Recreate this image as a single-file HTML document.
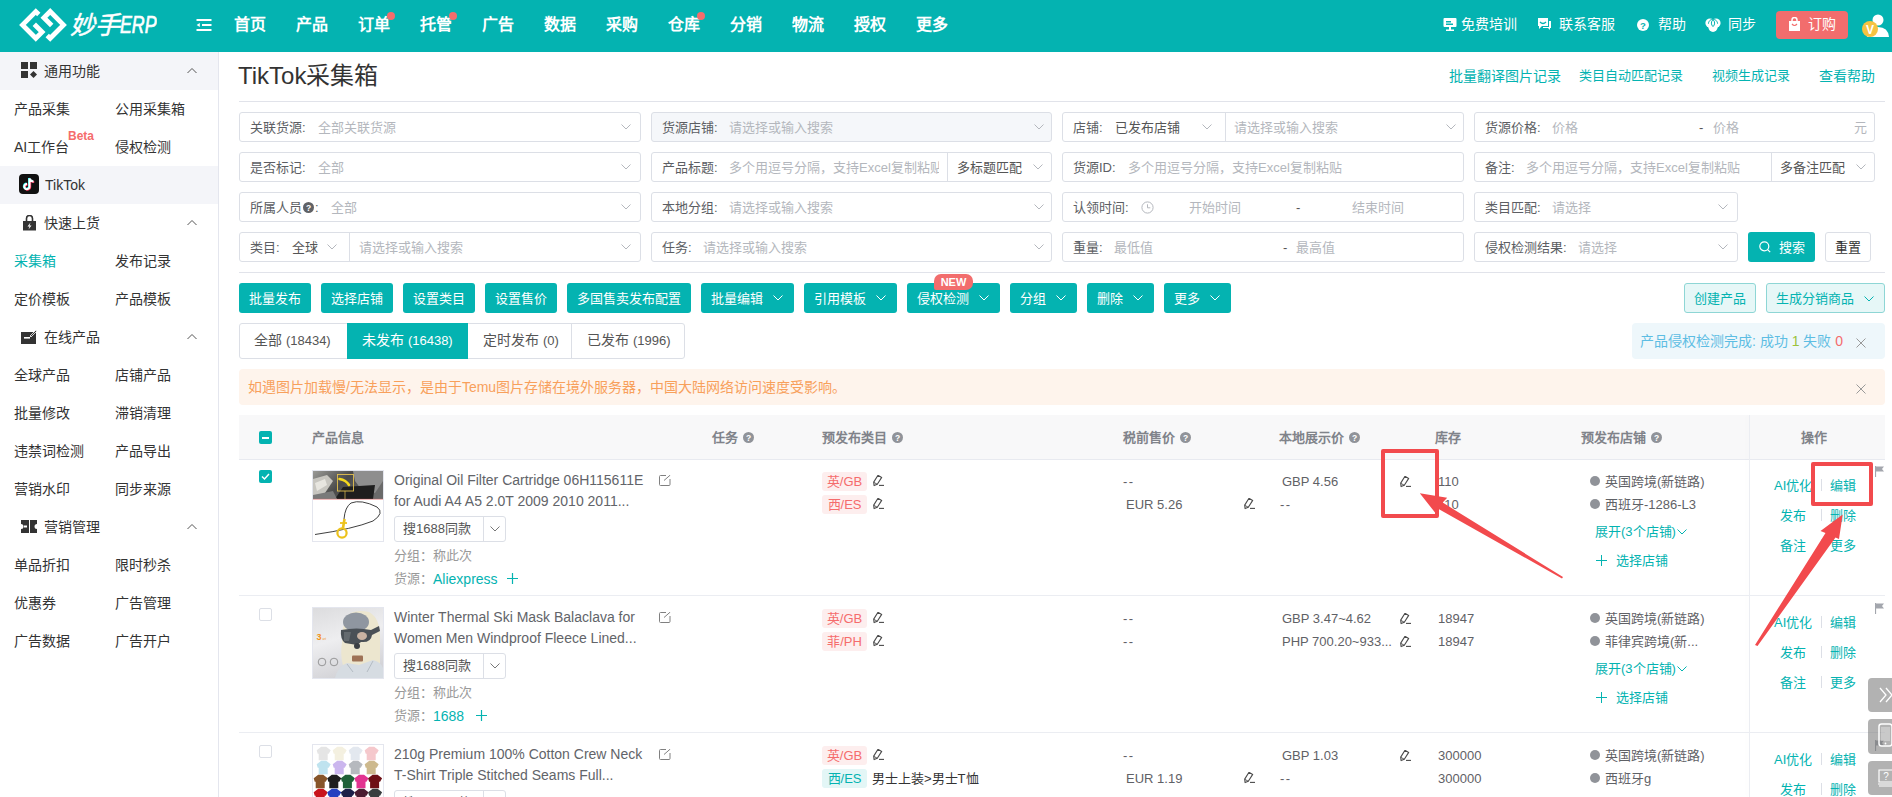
<!DOCTYPE html>
<html lang="zh-CN"><head><meta charset="utf-8">
<style>
*{box-sizing:border-box;margin:0;padding:0}
html,body{width:1892px;height:797px;overflow:hidden;background:#fff}
body{position:relative;font-family:"Liberation Sans",sans-serif;color:#333;font-size:14px}
.a{position:absolute;white-space:nowrap}
#hdr{position:absolute;left:0;top:0;width:1892px;height:52px;background:#04b3b1}
.nav{position:absolute;top:15px;line-height:20px;font-size:16px;font-weight:bold;color:#fff}
.dot{position:absolute;width:8px;height:8px;border-radius:50%;background:#f56c6c}
.hr{position:absolute;top:14px;line-height:20px;font-size:14px;color:#fff}
#side{position:absolute;left:0;top:52px;width:219px;height:745px;border-right:1px solid #e4e6ee;background:#fff}
.sh{position:absolute;left:0;width:218px;height:38px}
.si{position:absolute;line-height:20px;font-size:14px;color:#333}
.caret{position:absolute;left:187px;width:10px;height:10px}
.fb{position:absolute;height:30px;border:1px solid #dcdfe6;border-radius:3px;background:#fff}
.lb{position:absolute;top:6px;line-height:18px;font-size:13px;color:#5c5e63;white-space:nowrap}
.ph{position:absolute;top:6px;line-height:18px;font-size:13px;color:#b4b7bd;white-space:nowrap}
.vl{position:absolute;top:6px;line-height:18px;font-size:13px;color:#555;white-space:nowrap}
.chev{position:absolute;top:11px;width:10px;height:6px}
.vd{position:absolute;top:0;width:1px;height:28px;background:#dcdfe6}
.lk{position:absolute;top:66px;line-height:20px;color:#04b3b1;white-space:nowrap}
.btn{position:absolute;top:283px;height:30px;border-radius:3px;background:#04b3b1}
.bt{position:absolute;top:6px;left:10px;line-height:20px;font-size:13px;color:#fff;white-space:nowrap}
.bch{position:absolute;top:12px;width:10px;height:6px}
.tab{position:absolute;top:6px;line-height:22px;font-size:14px;color:#555;white-space:nowrap}
.th{position:absolute;top:428px;line-height:20px;font-size:13px;font-weight:bold;color:#80838a;white-space:nowrap}
.q{position:absolute;width:11px;height:11px}
.t14{position:absolute;line-height:20px;font-size:14px;color:#626469;white-space:nowrap}
.t13{position:absolute;padding-top:1px;line-height:20px;font-size:13px;color:#5f6166;white-space:nowrap}
.tag{position:absolute;margin-top:1px;left:822px;width:45px;height:19px;border-radius:3px;background:#fdeeee;color:#f56c6c;font-size:13px;line-height:19px;text-align:center}
.cb{position:absolute;left:259px;width:13px;height:13px;border-radius:2px;border:1px solid #dcdfe6;background:#fff}
.ac{position:absolute;padding-top:1px;line-height:20px;font-size:13px;color:#04b3b1;white-space:nowrap}
.sep{position:absolute;left:1821px;width:1px;height:12px;background:#dcdfe6}
.bul{position:absolute;left:1590px;width:10px;height:10px;border-radius:50%;background:#909399}
.rb{position:absolute;left:239px;width:1646px;height:1px;background:#ebedf2}
.pen{position:absolute;margin-top:2px;width:12px;height:12px}
</style></head><body>

<!-- HEADER -->
<div id="hdr">
  <svg class="a" style="left:0;top:0" width="70" height="52" viewBox="0 0 70 52">
    <g fill="none" stroke="#fff" stroke-width="4.8" stroke-linejoin="miter" stroke-linecap="butt">
      <path d="M38.8 14.4 L35.8 11.5 L22.5 24.9 L35.8 38.3 L42.1 32.1 L34.3 24.3"/>
      <path d="M47.2 35.4 L50.2 38.3 L63.5 24.9 L50.2 11.5 L43.9 17.7 L51.7 25.5"/>
    </g>
  </svg>
  <div class="a" style="left:70px;top:9px;font-size:25px;line-height:32px;color:#fff;font-style:italic;-webkit-text-stroke:0.5px #fff">妙手</div><div class="a" style="left:120px;top:9px;font-size:24px;line-height:32px;color:#fff;font-style:italic;transform:scaleX(0.74);transform-origin:0 0;-webkit-text-stroke:0.7px #fff">ERP</div>
  <svg class="a" style="left:196px;top:19px" width="16" height="12" viewBox="0 0 16 12"><rect x="0.5" y="0" width="15" height="2" fill="#fff"/><rect x="6" y="5" width="9.5" height="2" fill="#fff"/><rect x="0.5" y="10" width="15" height="2" fill="#fff"/><path d="M0.6 6 L3.8 3.9 L3.8 8.1 Z" fill="#fff"/></svg>
  <div class="nav" style="left:234px">首页</div>
  <div class="nav" style="left:296px">产品</div>
  <div class="nav" style="left:358px">订单</div><div class="dot" style="left:387px;top:12px"></div>
  <div class="nav" style="left:420px">托管</div><div class="dot" style="left:449px;top:12px"></div>
  <div class="nav" style="left:482px">广告</div>
  <div class="nav" style="left:544px">数据</div>
  <div class="nav" style="left:606px">采购</div>
  <div class="nav" style="left:668px">仓库</div><div class="dot" style="left:697px;top:12px"></div>
  <div class="nav" style="left:730px">分销</div>
  <div class="nav" style="left:792px">物流</div>
  <div class="nav" style="left:854px">授权</div>
  <div class="nav" style="left:916px">更多</div>

  <!-- right -->
  <svg class="a" style="left:1443px;top:17px" width="14" height="14" viewBox="0 0 14 14"><rect x="0.5" y="1" width="13" height="9" rx="1" fill="#fff"/><rect x="3" y="4" width="5" height="1.5" fill="#04b3b1"/><rect x="3" y="6.5" width="7" height="1.5" fill="#04b3b1"/><rect x="6" y="10" width="2" height="3" fill="#fff"/><rect x="3" y="12.5" width="8" height="1.5" fill="#fff"/></svg>
  <div class="hr" style="left:1461px">免费培训</div>
  <svg class="a" style="left:1537px;top:17px" width="15" height="14" viewBox="0 0 15 14"><path d="M1 1 H11 V9 H5 L2 12 V9 H1 Z" fill="#fff"/><path d="M12 4 H14 V11 H13 V13 L11 11 H6 V10 H12 Z" fill="#fff"/><path d="M3 5 Q6 8 9 5" stroke="#04b3b1" stroke-width="1.3" fill="none"/></svg>
  <div class="hr" style="left:1559px">联系客服</div>
  <svg class="a" style="left:1637px;top:19px" width="12" height="12" viewBox="0 0 12 12"><circle cx="6" cy="6" r="6" fill="#fff"/><text x="6" y="9.6" text-anchor="middle" font-size="9.5" font-weight="bold" fill="#04b3b1" font-family="Liberation Sans">?</text></svg>
  <div class="hr" style="left:1658px">帮助</div>
  <svg class="a" style="left:1705px;top:18px" width="16" height="14" viewBox="0 0 16 14"><circle cx="5" cy="5" r="4.6" fill="#fff"/><circle cx="11" cy="5" r="4.6" fill="#fff"/><circle cx="8" cy="9.3" r="4.6" fill="#fff"/><path d="M8 1.6 A4.6 4.6 0 0 1 8 8.6 A4.6 4.6 0 0 1 8 1.6" fill="none" stroke="#04b3b1" stroke-width="1"/><path d="M3.4 5.8 A4.6 4.6 0 0 1 12.6 5.8" fill="none" stroke="#04b3b1" stroke-width="0.9"/></svg>
  <div class="hr" style="left:1728px">同步</div>
  <div class="a" style="left:1776px;top:11px;width:72px;height:28px;border-radius:4px;background:#f26d6d"></div>
  <svg class="a" style="left:1788px;top:17px" width="13" height="15" viewBox="0 0 13 15"><path d="M1 4 H12 V14 H1 Z" fill="#fff"/><path d="M4 5 V3 A2.5 2.5 0 0 1 9 3 V5" stroke="#fff" stroke-width="1.5" fill="none"/><path d="M4 7 Q6.5 10 9 7" stroke="#f26d6d" stroke-width="1.2" fill="none"/></svg>
  <div class="hr" style="left:1808px">订购</div>
  <svg class="a" style="left:1858px;top:12px" width="34" height="30" viewBox="0 0 34 30"><circle cx="20" cy="8" r="5.5" fill="#fff"/><path d="M9 25 Q10 15 20 15 Q30 15 31 25 Z" fill="#fff"/><circle cx="12" cy="17" r="8" fill="#f6c342"/><text x="12" y="21.5" text-anchor="middle" font-size="12" font-weight="bold" fill="#fff" font-family="Liberation Sans">V</text></svg>
</div>

<!-- SIDEBAR -->
<div id="side">
  <div class="sh" style="top:0;background:#f4f5f9"></div>
  <div class="sh" style="top:114px;background:#f4f5f9"></div>
  <!-- 通用功能 -->
  <svg class="a" style="left:21px;top:10px" width="16" height="16" viewBox="0 0 16 16"><rect x="0" y="0" width="7" height="7" fill="#333"/><rect x="9" y="0" width="7" height="7" fill="#333"/><rect x="0" y="9" width="7" height="7" fill="#333"/><path d="M12.5 9 L16 12.5 L12.5 16 L9 12.5 Z" fill="#333"/></svg>
  <div class="si" style="left:44px;top:9px">通用功能</div>
  <svg class="caret" style="top:14px" viewBox="0 0 10 10"><path d="M0.5 7 L5 2.5 L9.5 7" stroke="#555" stroke-width="1" fill="none"/></svg>
  <div class="si" style="left:14px;top:47px">产品采集</div>
  <div class="si" style="left:115px;top:47px">公用采集箱</div>
  <div class="si" style="left:14px;top:85px">AI工作台</div>
  <div class="a" style="left:68px;top:77px;font-size:12px;line-height:14px;font-weight:bold;color:#f56c6c">Beta</div>
  <div class="si" style="left:115px;top:85px">侵权检测</div>
  <!-- TikTok -->
  <svg class="a" style="left:19px;top:122px" width="20" height="20" viewBox="0 0 20 20"><rect width="20" height="20" rx="4" fill="#111"/><path d="M10.5 4.5 V12.5 A2.6 2.6 0 1 1 8 10 M10.5 4.5 Q11.5 7.5 14.5 7.5" stroke="#ff2d55" stroke-width="2" fill="none" transform="translate(0.7,0.5)"/><path d="M10.5 4.5 V12.5 A2.6 2.6 0 1 1 8 10 M10.5 4.5 Q11.5 7.5 14.5 7.5" stroke="#25f4ee" stroke-width="2" fill="none" transform="translate(-0.5,-0.4)"/><path d="M10.5 4.5 V12.5 A2.6 2.6 0 1 1 8 10 M10.5 4.5 Q11.5 7.5 14.5 7.5" stroke="#fff" stroke-width="2" fill="none"/></svg>
  <div class="si" style="left:45px;top:123px">TikTok</div>
  <!-- 快速上货 -->
  <svg class="a" style="left:22px;top:163px" width="15" height="16" viewBox="0 0 15 16"><path d="M4.5 6 V3.5 A3 3 0 0 1 10.5 3.5 V6" stroke="#333" stroke-width="1.6" fill="none"/><path d="M1 6 H14 V15.5 H1 Z" fill="#333"/><path d="M8.5 7.5 L5.5 11.5 H7.5 L6.5 14.5 L9.5 10.5 H7.5 Z" fill="#fff"/></svg>
  <div class="si" style="left:44px;top:161px">快速上货</div>
  <svg class="caret" style="top:166px" viewBox="0 0 10 10"><path d="M0.5 7 L5 2.5 L9.5 7" stroke="#555" stroke-width="1" fill="none"/></svg>
  <div class="si" style="left:14px;top:199px;color:#04b3b1">采集箱</div>
  <div class="si" style="left:115px;top:199px">发布记录</div>
  <div class="si" style="left:14px;top:237px">定价模板</div>
  <div class="si" style="left:115px;top:237px">产品模板</div>
  <!-- 在线产品 -->
  <svg class="a" style="left:21px;top:277px" width="16" height="15" viewBox="0 0 16 15"><path d="M0 3 H10 V5 H3 V11 H2 V3 Z" fill="#333"/><path d="M0 3 H11 L9 5 H0 Z" fill="#333"/><rect x="0" y="3" width="15" height="12" fill="#333"/><rect x="3" y="8" width="6" height="1.6" fill="#fff"/><path d="M9 7 L15 1 L16 2 L10 8 Z" fill="#333" stroke="#fff" stroke-width="0.8"/></svg>
  <div class="si" style="left:44px;top:275px">在线产品</div>
  <svg class="caret" style="top:280px" viewBox="0 0 10 10"><path d="M0.5 7 L5 2.5 L9.5 7" stroke="#555" stroke-width="1" fill="none"/></svg>
  <div class="si" style="left:14px;top:313px">全球产品</div>
  <div class="si" style="left:115px;top:313px">店铺产品</div>
  <div class="si" style="left:14px;top:351px">批量修改</div>
  <div class="si" style="left:115px;top:351px">滞销清理</div>
  <div class="si" style="left:14px;top:389px">违禁词检测</div>
  <div class="si" style="left:115px;top:389px">产品导出</div>
  <div class="si" style="left:14px;top:427px">营销水印</div>
  <div class="si" style="left:115px;top:427px">同步来源</div>
  <!-- 营销管理 -->
  <svg class="a" style="left:21px;top:468px" width="16" height="13" viewBox="0 0 16 13"><path d="M0 0 H8 V13 H0 V9 A2.5 2.5 0 0 0 0 4 Z" fill="#333"/><path d="M9 0 H16 V4 A2.5 2.5 0 0 0 16 9 V13 H9 Z" fill="#333"/><rect x="3" y="5.5" width="3" height="2" fill="#fff"/></svg>
  <div class="si" style="left:44px;top:465px">营销管理</div>
  <svg class="caret" style="top:470px" viewBox="0 0 10 10"><path d="M0.5 7 L5 2.5 L9.5 7" stroke="#555" stroke-width="1" fill="none"/></svg>
  <div class="si" style="left:14px;top:503px">单品折扣</div>
  <div class="si" style="left:115px;top:503px">限时秒杀</div>
  <div class="si" style="left:14px;top:541px">优惠券</div>
  <div class="si" style="left:115px;top:541px">广告管理</div>
  <div class="si" style="left:14px;top:579px">广告数据</div>
  <div class="si" style="left:115px;top:579px">广告开户</div>
</div>


<!-- MAIN -->
<div class="a" style="left:238px;top:61px;font-size:24px;line-height:30px;color:#333">TikTok采集箱</div>
<div class="lk" style="left:1449px;font-size:14px">批量翻译图片记录</div>
<div class="lk" style="left:1579px;font-size:13px">类目自动匹配记录</div>
<div class="lk" style="left:1712px;font-size:13px">视频生成记录</div>
<div class="lk" style="left:1819px;font-size:14px">查看帮助</div>
<div class="a" style="left:239px;top:101px;width:1646px;height:1px;background:#e1e3ea"></div>

<!-- filter row 1 -->
<div class="fb" style="left:239px;top:112px;width:402px"><div class="lb" style="left:10px">关联货源:</div><div class="ph" style="left:78px">全部关联货源</div><svg class="chev" style="left:381px" viewBox="0 0 10 6"><path d="M0.5 0.5 L5 5 L9.5 0.5" stroke="#b4b7bd" stroke-width="1" fill="none"/></svg></div>
<div class="fb" style="left:651px;top:112px;width:401px;background:#f5f7fa"><div class="lb" style="left:10px">货源店铺:</div><div class="ph" style="left:77px">请选择或输入搜索</div><svg class="chev" style="left:382px" viewBox="0 0 10 6"><path d="M0.5 0.5 L5 5 L9.5 0.5" stroke="#b4b7bd" stroke-width="1" fill="none"/></svg></div>
<div class="fb" style="left:1062px;top:112px;width:402px"><div class="lb" style="left:10px">店铺:</div><div class="vl" style="left:52px">已发布店铺</div><svg class="chev" style="left:139px" viewBox="0 0 10 6"><path d="M0.5 0.5 L5 5 L9.5 0.5" stroke="#b4b7bd" stroke-width="1" fill="none"/></svg><div class="vd" style="left:162px"></div><div class="ph" style="left:171px">请选择或输入搜索</div><svg class="chev" style="left:383px" viewBox="0 0 10 6"><path d="M0.5 0.5 L5 5 L9.5 0.5" stroke="#b4b7bd" stroke-width="1" fill="none"/></svg></div>
<div class="fb" style="left:1474px;top:112px;width:401px"><div class="lb" style="left:10px">货源价格:</div><div class="ph" style="left:77px">价格</div><div class="ph" style="left:224px;color:#555">-</div><div class="ph" style="left:238px">价格</div><div class="ph" style="left:379px">元</div></div>

<!-- filter row 2 -->
<div class="fb" style="left:239px;top:152px;width:402px"><div class="lb" style="left:10px">是否标记:</div><div class="ph" style="left:78px">全部</div><svg class="chev" style="left:381px" viewBox="0 0 10 6"><path d="M0.5 0.5 L5 5 L9.5 0.5" stroke="#b4b7bd" stroke-width="1" fill="none"/></svg></div>
<div class="fb" style="left:651px;top:152px;width:401px;overflow:hidden"><div class="lb" style="left:10px">产品标题:</div><div class="ph" style="left:77px;width:210px;overflow:hidden">多个用逗号分隔，支持Excel复制粘贴</div><div class="vd" style="left:295px"></div><div class="vl" style="left:305px">多标题匹配</div><svg class="chev" style="left:381px" viewBox="0 0 10 6"><path d="M0.5 0.5 L5 5 L9.5 0.5" stroke="#b4b7bd" stroke-width="1" fill="none"/></svg></div>
<div class="fb" style="left:1062px;top:152px;width:402px"><div class="lb" style="left:10px">货源ID:</div><div class="ph" style="left:65px">多个用逗号分隔，支持Excel复制粘贴</div></div>
<div class="fb" style="left:1474px;top:152px;width:401px"><div class="lb" style="left:10px">备注:</div><div class="ph" style="left:51px">多个用逗号分隔，支持Excel复制粘贴</div><div class="vd" style="left:296px"></div><div class="vl" style="left:305px">多备注匹配</div><svg class="chev" style="left:381px" viewBox="0 0 10 6"><path d="M0.5 0.5 L5 5 L9.5 0.5" stroke="#b4b7bd" stroke-width="1" fill="none"/></svg></div>

<!-- filter row 3 -->
<div class="fb" style="left:239px;top:192px;width:402px"><div class="lb" style="left:10px">所属人员</div><svg class="a" style="left:63px;top:9px" width="11" height="11" viewBox="0 0 11 11"><circle cx="5.5" cy="5.5" r="5.5" fill="#606266"/><text x="5.5" y="9" text-anchor="middle" font-size="8.5" font-weight="bold" fill="#fff" font-family="Liberation Sans">?</text></svg><div class="lb" style="left:75px">:</div><div class="ph" style="left:91px">全部</div><svg class="chev" style="left:381px" viewBox="0 0 10 6"><path d="M0.5 0.5 L5 5 L9.5 0.5" stroke="#b4b7bd" stroke-width="1" fill="none"/></svg></div>
<div class="fb" style="left:651px;top:192px;width:401px"><div class="lb" style="left:10px">本地分组:</div><div class="ph" style="left:77px">请选择或输入搜索</div><svg class="chev" style="left:382px" viewBox="0 0 10 6"><path d="M0.5 0.5 L5 5 L9.5 0.5" stroke="#b4b7bd" stroke-width="1" fill="none"/></svg></div>
<div class="fb" style="left:1062px;top:192px;width:402px"><div class="lb" style="left:10px">认领时间:</div><svg class="a" style="left:78px;top:8px" width="13" height="13" viewBox="0 0 13 13"><circle cx="6.5" cy="6.5" r="5.6" stroke="#b4b7bd" stroke-width="1" fill="none"/><path d="M6.5 3.3 V6.8 H9.3" stroke="#b4b7bd" stroke-width="1" fill="none"/></svg><div class="ph" style="left:126px">开始时间</div><div class="ph" style="left:233px;color:#555">-</div><div class="ph" style="left:289px">结束时间</div></div>
<div class="fb" style="left:1474px;top:192px;width:264px"><div class="lb" style="left:10px">类目匹配:</div><div class="ph" style="left:77px">请选择</div><svg class="chev" style="left:243px" viewBox="0 0 10 6"><path d="M0.5 0.5 L5 5 L9.5 0.5" stroke="#b4b7bd" stroke-width="1" fill="none"/></svg></div>

<!-- filter row 4 -->
<div class="fb" style="left:239px;top:232px;width:402px"><div class="lb" style="left:10px">类目:</div><div class="vl" style="left:52px">全球</div><svg class="chev" style="left:87px" viewBox="0 0 10 6"><path d="M0.5 0.5 L5 5 L9.5 0.5" stroke="#b4b7bd" stroke-width="1" fill="none"/></svg><div class="vd" style="left:109px"></div><div class="ph" style="left:119px">请选择或输入搜索</div><svg class="chev" style="left:381px" viewBox="0 0 10 6"><path d="M0.5 0.5 L5 5 L9.5 0.5" stroke="#b4b7bd" stroke-width="1" fill="none"/></svg></div>
<div class="fb" style="left:651px;top:232px;width:401px"><div class="lb" style="left:10px">任务:</div><div class="ph" style="left:51px">请选择或输入搜索</div><svg class="chev" style="left:382px" viewBox="0 0 10 6"><path d="M0.5 0.5 L5 5 L9.5 0.5" stroke="#b4b7bd" stroke-width="1" fill="none"/></svg></div>
<div class="fb" style="left:1062px;top:232px;width:402px"><div class="lb" style="left:10px">重量:</div><div class="ph" style="left:51px">最低值</div><div class="ph" style="left:220px;color:#555">-</div><div class="ph" style="left:233px">最高值</div></div>
<div class="fb" style="left:1474px;top:232px;width:264px"><div class="lb" style="left:10px">侵权检测结果:</div><div class="ph" style="left:103px">请选择</div><svg class="chev" style="left:243px" viewBox="0 0 10 6"><path d="M0.5 0.5 L5 5 L9.5 0.5" stroke="#b4b7bd" stroke-width="1" fill="none"/></svg></div>
<div class="a" style="left:1748px;top:232px;width:67px;height:30px;border-radius:3px;background:#04b3b1"></div>
<svg class="a" style="left:1759px;top:241px" width="12" height="12" viewBox="0 0 12 12"><circle cx="5.3" cy="5.3" r="4.5" stroke="#fff" stroke-width="1.2" fill="none"/><path d="M8.6 8.6 L11.2 11.2" stroke="#fff" stroke-width="1.2"/></svg>
<div class="a" style="left:1779px;top:238px;line-height:20px;font-size:13px;color:#fff">搜索</div>
<div class="a" style="left:1825px;top:232px;width:46px;height:30px;border-radius:3px;border:1px solid #dcdfe6;background:#fff"></div>
<div class="a" style="left:1835px;top:238px;line-height:20px;font-size:13px;color:#333">重置</div>
<div class="a" style="left:239px;top:272px;width:1646px;height:1px;background:#e1e3ea"></div>
<div class="btn" style="left:239px;width:72px"><div class="bt">批量发布</div></div>
<div class="btn" style="left:321px;width:72px"><div class="bt">选择店铺</div></div>
<div class="btn" style="left:403px;width:72px"><div class="bt">设置类目</div></div>
<div class="btn" style="left:485px;width:72px"><div class="bt">设置售价</div></div>
<div class="btn" style="left:567px;width:124px"><div class="bt">多国售卖发布配置</div></div>
<div class="btn" style="left:701px;width:93px"><div class="bt">批量编辑</div><svg class="bch" style="left:72px" viewBox="0 0 10 6"><path d="M0.5 0.5 L5 5 L9.5 0.5" stroke="#fff" stroke-width="1" fill="none"/></svg></div>
<div class="btn" style="left:804px;width:93px"><div class="bt">引用模板</div><svg class="bch" style="left:72px" viewBox="0 0 10 6"><path d="M0.5 0.5 L5 5 L9.5 0.5" stroke="#fff" stroke-width="1" fill="none"/></svg></div>
<div class="btn" style="left:907px;width:93px"><div class="bt">侵权检测</div><svg class="bch" style="left:72px" viewBox="0 0 10 6"><path d="M0.5 0.5 L5 5 L9.5 0.5" stroke="#fff" stroke-width="1" fill="none"/></svg></div>
<div class="btn" style="left:1010px;width:67px"><div class="bt">分组</div><svg class="bch" style="left:46px" viewBox="0 0 10 6"><path d="M0.5 0.5 L5 5 L9.5 0.5" stroke="#fff" stroke-width="1" fill="none"/></svg></div>
<div class="btn" style="left:1087px;width:67px"><div class="bt">删除</div><svg class="bch" style="left:46px" viewBox="0 0 10 6"><path d="M0.5 0.5 L5 5 L9.5 0.5" stroke="#fff" stroke-width="1" fill="none"/></svg></div>
<div class="btn" style="left:1164px;width:67px"><div class="bt">更多</div><svg class="bch" style="left:46px" viewBox="0 0 10 6"><path d="M0.5 0.5 L5 5 L9.5 0.5" stroke="#fff" stroke-width="1" fill="none"/></svg></div>
<div class="a" style="left:934px;top:274px;width:39px;height:16px;border-radius:7px 7px 7px 2px;background:#f26d6d;color:#fff;font-size:11px;font-weight:bold;line-height:16px;text-align:center">NEW</div>
<div class="a" style="left:1684px;top:283px;width:72px;height:30px;border:1px solid #8ed6d5;border-radius:3px;background:#e6f7f7"><div class="bt" style="left:9px;top:5px;color:#04b3b1">创建产品</div></div>
<div class="a" style="left:1766px;top:283px;width:119px;height:30px;border:1px solid #8ed6d5;border-radius:3px;background:#e6f7f7"><div class="bt" style="left:9px;top:5px;color:#04b3b1">生成分销商品</div><svg class="bch" style="left:97px;top:12px" viewBox="0 0 10 6"><path d="M0.5 0.5 L5 5 L9.5 0.5" stroke="#04b3b1" stroke-width="1" fill="none"/></svg></div>

<!-- tabs -->
<div class="a" style="left:239px;top:323px;width:446px;height:36px;border:1px solid #dcdfe6;border-radius:3px"></div>
<div class="a" style="left:347px;top:323px;width:121px;height:36px;background:#04b3b1"></div>
<div class="a" style="left:571px;top:324px;width:1px;height:34px;background:#dcdfe6"></div>
<div class="a" style="left:239px;top:323px;height:36px"><div class="tab" style="left:15px">全部 <span style="font-size:13px">(18434)</span></div></div>
<div class="a" style="left:347px;top:323px;height:36px"><div class="tab" style="left:15px;color:#fff">未发布 <span style="font-size:13px">(16438)</span></div></div>
<div class="a" style="left:468px;top:323px;height:36px"><div class="tab" style="left:15px">定时发布 <span style="font-size:13px">(0)</span></div></div>
<div class="a" style="left:571px;top:323px;height:36px"><div class="tab" style="left:16px">已发布 <span style="font-size:13px">(1996)</span></div></div>

<!-- notification -->
<div class="a" style="left:1632px;top:323px;width:253px;height:36px;border-radius:4px;background:#eef7fb"></div>
<div class="a" style="left:1640px;top:331px;line-height:20px;font-size:14px;color:#5dbde3">产品侵权检测完成: 成功 <span style="color:#9ac23c">1</span> 失败 <span style="color:#f56c6c">0</span></div>
<svg class="a" style="left:1856px;top:338px" width="10" height="10" viewBox="0 0 10 10"><path d="M0.5 0.5 L9.5 9.5 M9.5 0.5 L0.5 9.5" stroke="#999" stroke-width="1"/></svg>

<!-- warning -->
<div class="a" style="left:239px;top:369px;width:1646px;height:36px;border-radius:4px;background:#fef4ec"></div>
<div class="a" style="left:248px;top:377px;line-height:20px;font-size:14px;color:#f8a05b">如遇图片加载慢/无法显示，是由于Temu图片存储在境外服务器，中国大陆网络访问速度受影响。</div>
<svg class="a" style="left:1856px;top:384px" width="10" height="10" viewBox="0 0 10 10"><path d="M0.5 0.5 L9.5 9.5 M9.5 0.5 L0.5 9.5" stroke="#999" stroke-width="1"/></svg>

<!-- table header -->
<div class="a" style="left:239px;top:415px;width:1646px;height:45px;background:#f8f8f9;border-bottom:1px solid #e8eaf0"></div>
<div class="a" style="left:1749px;top:415px;width:1px;height:382px;background:#ebedf2;box-shadow:-2px 0 4px rgba(0,0,0,0.04)"></div>
<div class="a" style="left:259px;top:431px;width:13px;height:13px;border-radius:2px;background:#04b3b1"><div class="a" style="left:3px;top:5.5px;width:7px;height:2px;background:#fff"></div></div>
<div class="th" style="left:312px">产品信息</div>
<div class="th" style="left:712px">任务</div>
<div class="th" style="left:822px">预发布类目</div>
<div class="th" style="left:1123px">税前售价</div>
<div class="th" style="left:1279px">本地展示价</div>
<div class="th" style="left:1435px">库存</div>
<div class="th" style="left:1581px">预发布店铺</div>
<div class="th" style="left:1801px">操作</div>
<svg class="q" style="left:743px;top:432px" viewBox="0 0 11 11"><circle cx="5.5" cy="5.5" r="5.5" fill="#909399"/><text x="5.5" y="9" text-anchor="middle" font-size="8.5" font-weight="bold" fill="#fff" font-family="Liberation Sans">?</text></svg>
<svg class="q" style="left:892px;top:432px" viewBox="0 0 11 11"><circle cx="5.5" cy="5.5" r="5.5" fill="#909399"/><text x="5.5" y="9" text-anchor="middle" font-size="8.5" font-weight="bold" fill="#fff" font-family="Liberation Sans">?</text></svg>
<svg class="q" style="left:1180px;top:432px" viewBox="0 0 11 11"><circle cx="5.5" cy="5.5" r="5.5" fill="#909399"/><text x="5.5" y="9" text-anchor="middle" font-size="8.5" font-weight="bold" fill="#fff" font-family="Liberation Sans">?</text></svg>
<svg class="q" style="left:1349px;top:432px" viewBox="0 0 11 11"><circle cx="5.5" cy="5.5" r="5.5" fill="#909399"/><text x="5.5" y="9" text-anchor="middle" font-size="8.5" font-weight="bold" fill="#fff" font-family="Liberation Sans">?</text></svg>
<svg class="q" style="left:1651px;top:432px" viewBox="0 0 11 11"><circle cx="5.5" cy="5.5" r="5.5" fill="#909399"/><text x="5.5" y="9" text-anchor="middle" font-size="8.5" font-weight="bold" fill="#fff" font-family="Liberation Sans">?</text></svg>
<!-- rows -->
<div class="a" style="left:259px;top:470px;width:13px;height:13px;border-radius:2px;background:#04b3b1"><svg class="a" style="left:2px;top:2px" width="9" height="9" viewBox="0 0 9 9"><path d="M1 4.5 L3.5 7 L8 2" stroke="#fff" stroke-width="1.5" fill="none"/></svg></div><div class="a" style="left:312px;top:470px;width:72px;height:72px;border:1px solid #e4e6ee;overflow:hidden;background:#fff"><svg width="70" height="70" viewBox="0 0 70 70"><defs><linearGradient id="g1" x1="0" y1="0" x2="1" y2="0.4"><stop offset="0" stop-color="#9a9a96"/><stop offset="0.5" stop-color="#4a4a4a"/><stop offset="1" stop-color="#6a6a6a"/></linearGradient></defs><rect width="70" height="28" fill="url(#g1)"/><path d="M0 8 L14 4 L20 10 L8 28 H0 Z" fill="#c8c6c0"/><path d="M2 12 L12 8 L14 14 L4 20 Z" fill="#e8e6e0"/><path d="M40 0 H70 V10 L62 22 L48 18 L42 10 Z" fill="#8e8e8e"/><path d="M30 16 L62 14 L60 28 H22 Z" fill="#1e1e1e"/><path d="M0 24 L20 20 L24 28 H0Z" fill="#7a7a7a"/><rect x="24.5" y="3.5" width="16" height="16.5" fill="none" stroke="#e3c050" stroke-width="0.9"/><path d="M26.5 8 Q33 9 36 14" stroke="#f4d81c" stroke-width="2.6" stroke-linecap="round" fill="none"/><path d="M32 20 V28" stroke="#e3c050" stroke-width="0.7"/><rect y="28" width="70" height="42" fill="#fff"/><path d="M0 28.3 H70" stroke="#e07070" stroke-width="0.6"/><path d="M2 63.5 Q40 58 60 50 Q72 42 64 36 Q48 28 38 32 Q32 36 31 48" stroke="#2a2a2a" stroke-width="0.9" fill="none"/><circle cx="29" cy="62" r="4.6" stroke="#ecc21c" stroke-width="2.2" fill="none"/><path d="M30 57 L31.5 48" stroke="#ecc21c" stroke-width="2.6"/><path d="M27 52 H34" stroke="#ecc21c" stroke-width="1.8"/></svg></div><div class="t14" style="left:394px;top:470px">Original Oil Filter Cartridge 06H115611E</div><div class="t14" style="left:394px;top:491px">for Audi A4 A5 2.0T 2009 2010 2011...</div><svg class="a" style="left:659px;top:475px" width="12" height="11" viewBox="0 0 12 11"><path d="M7 0.5 H1.5 A1 1 0 0 0 0.5 1.5 V9.5 A1 1 0 0 0 1.5 10.5 H10 A1 1 0 0 0 11 9.5 V4" stroke="#808080" stroke-width="1" fill="none"/><path d="M5 5.5 L11.3 0" stroke="#808080" stroke-width="1"/></svg><div class="a" style="left:394px;top:516px;width:112px;height:26px;border:1px solid #dcdfe6;border-radius:3px"></div><div class="a" style="left:483px;top:516px;width:1px;height:26px;background:#dcdfe6"></div><div class="t13" style="left:403px;top:518px;color:#555">搜1688同款</div><svg class="a" style="left:490px;top:526px" width="10" height="6" viewBox="0 0 10 6"><path d="M0.5 0.5 L5 5 L9.5 0.5" stroke="#777" stroke-width="1" fill="none"/></svg><div class="t13" style="left:394px;top:545px;color:#999">分组：称此次</div><div class="t13" style="left:394px;top:568px;color:#999">货源：</div><div class="t13" style="left:433px;top:568px;color:#04b3b1;font-size:14px">Aliexpress</div><svg class="a" style="left:507px;top:573px" width="11" height="11" viewBox="0 0 11 11"><path d="M5.5 0 V11 M0 5.5 H11" stroke="#04b3b1" stroke-width="1.2"/></svg><div class="tag" style="top:471px">英/GB</div><svg class="pen" style="left:873px;top:473px" viewBox="0 0 12 12"><path d="M5 0.3 L8.7 2.4 L4.3 9.2 L1.1 10.6 L0.7 7.1 Z" stroke="#4a4a4a" stroke-width="1.1" fill="none" stroke-linejoin="round"/><path d="M0.9 7.4 L4.2 9.2" stroke="#4a4a4a" stroke-width="0.9"/><path d="M6 10.4 H11" stroke="#4a4a4a" stroke-width="1.1"/></svg><div class="tag" style="top:494px">西/ES</div><svg class="pen" style="left:873px;top:496px" viewBox="0 0 12 12"><path d="M5 0.3 L8.7 2.4 L4.3 9.2 L1.1 10.6 L0.7 7.1 Z" stroke="#4a4a4a" stroke-width="1.1" fill="none" stroke-linejoin="round"/><path d="M0.9 7.4 L4.2 9.2" stroke="#4a4a4a" stroke-width="0.9"/><path d="M6 10.4 H11" stroke="#4a4a4a" stroke-width="1.1"/></svg><div class="t13" style="left:1123px;top:471px;letter-spacing:1.5px">--</div><div class="t13" style="left:1126px;top:494px">EUR 5.26</div><svg class="pen" style="left:1244px;top:496px" viewBox="0 0 12 12"><path d="M5 0.3 L8.7 2.4 L4.3 9.2 L1.1 10.6 L0.7 7.1 Z" stroke="#4a4a4a" stroke-width="1.1" fill="none" stroke-linejoin="round"/><path d="M0.9 7.4 L4.2 9.2" stroke="#4a4a4a" stroke-width="0.9"/><path d="M6 10.4 H11" stroke="#4a4a4a" stroke-width="1.1"/></svg><div class="t13" style="left:1282px;top:471px">GBP 4.56</div><svg class="pen" style="left:1400px;top:474px" viewBox="0 0 12 12"><path d="M5 0.3 L8.7 2.4 L4.3 9.2 L1.1 10.6 L0.7 7.1 Z" stroke="#4a4a4a" stroke-width="1.1" fill="none" stroke-linejoin="round"/><path d="M0.9 7.4 L4.2 9.2" stroke="#4a4a4a" stroke-width="0.9"/><path d="M6 10.4 H11" stroke="#4a4a4a" stroke-width="1.1"/></svg><div class="t13" style="left:1280px;top:494px;letter-spacing:1.5px">--</div><div class="t13" style="left:1438px;top:471px">110</div><div class="t13" style="left:1438px;top:494px">110</div><div class="bul" style="top:476px"></div><div class="t13" style="left:1605px;top:471px">英国跨境(新链路)</div><div class="bul" style="top:499px"></div><div class="t13" style="left:1605px;top:494px">西班牙-1286-L3</div><div class="ac" style="left:1595px;top:521px">展开(3个店铺)</div><svg class="a" style="left:1677px;top:529px" width="10" height="6" viewBox="0 0 10 6"><path d="M0.5 0.5 L5 5 L9.5 0.5" stroke="#04b3b1" stroke-width="1" fill="none"/></svg><svg class="a" style="left:1596px;top:555px" width="11" height="11" viewBox="0 0 11 11"><path d="M5.5 0 V11 M0 5.5 H11" stroke="#04b3b1" stroke-width="1"/></svg><div class="ac" style="left:1616px;top:550px">选择店铺</div><div class="ac" style="left:1774px;top:475px">AI优化</div><div class="sep" style="top:479px"></div><div class="ac" style="left:1830px;top:475px">编辑</div><div class="ac" style="left:1780px;top:505px">发布</div><div class="sep" style="top:509px"></div><div class="ac" style="left:1830px;top:505px">删除</div><div class="ac" style="left:1780px;top:535px">备注</div><div class="sep" style="top:539px"></div><div class="ac" style="left:1830px;top:535px">更多</div><svg class="a" style="left:1875px;top:466px" width="9" height="11" viewBox="0 0 9 11"><path d="M0.5 0 V11" stroke="#a3a6ad" stroke-width="1.2"/><path d="M1 0.5 H9 L7 3 L9 5.5 H1 Z" fill="#a3a6ad"/></svg><div class="rb" style="top:595px"></div>
<div class="cb" style="top:608px"></div><div class="a" style="left:312px;top:607px;width:72px;height:72px;border:1px solid #e4e6ee;overflow:hidden;background:#fff"><svg width="70" height="70" viewBox="0 0 70 70"><defs><linearGradient id="g2" x1="0" y1="0" x2="0.3" y2="1"><stop offset="0" stop-color="#dcdcde"/><stop offset="0.5" stop-color="#eeeef0"/><stop offset="1" stop-color="#d4d4d8"/></linearGradient></defs><rect width="70" height="70" fill="url(#g2)"/>
<path d="M36 6 Q44 1 56 4 Q67 10 67 28 L67 56 Q58 60 48 58 L30 58 Q27 45 29 35 Q28 18 36 6 Z" fill="#ece6cf"/>
<ellipse cx="43" cy="14" rx="13" ry="9.5" fill="#8f96a0"/>
<path d="M28 22 Q44 19 58 22 L66 18 L67 23 L59 27 Q58 35 48 34 L44 37 Q38 36 32 35 Q27 31 28 22 Z" fill="#4a5056"/>
<path d="M31 24 H38 L36 33 H31 Z" fill="#6a7076" opacity="0.8"/>
<ellipse cx="49" cy="28" rx="5" ry="4" fill="#c9b2a2"/>
<circle cx="44" cy="38" r="3" fill="#3b3f44"/>
<rect x="39" y="47.5" width="11" height="6" rx="1" fill="#9e7256"/>
<path d="M22 70 Q25 58 34 55 L46 57 L60 52 Q68 54 70 60 V70 Z" fill="#d6dce2"/>
<path d="M34 56 L40 64 M60 53 L54 64" stroke="#aab2ba" stroke-width="0.8"/>
<text x="3.5" y="32" font-size="9" font-weight="bold" fill="#f39321" font-family="Liberation Sans">3</text><text x="9.5" y="32" font-size="3" fill="#f39321" font-family="Liberation Sans">art</text>
<circle cx="9" cy="54" r="3.8" fill="none" stroke="#777" stroke-width="0.7"/><circle cx="21" cy="54" r="3.8" fill="none" stroke="#777" stroke-width="0.7"/></svg></div><div class="t14" style="left:394px;top:607px">Winter Thermal Ski Mask Balaclava for</div><div class="t14" style="left:394px;top:628px">Women Men Windproof Fleece Lined...</div><svg class="a" style="left:659px;top:612px" width="12" height="11" viewBox="0 0 12 11"><path d="M7 0.5 H1.5 A1 1 0 0 0 0.5 1.5 V9.5 A1 1 0 0 0 1.5 10.5 H10 A1 1 0 0 0 11 9.5 V4" stroke="#808080" stroke-width="1" fill="none"/><path d="M5 5.5 L11.3 0" stroke="#808080" stroke-width="1"/></svg><div class="a" style="left:394px;top:653px;width:112px;height:26px;border:1px solid #dcdfe6;border-radius:3px"></div><div class="a" style="left:483px;top:653px;width:1px;height:26px;background:#dcdfe6"></div><div class="t13" style="left:403px;top:655px;color:#555">搜1688同款</div><svg class="a" style="left:490px;top:663px" width="10" height="6" viewBox="0 0 10 6"><path d="M0.5 0.5 L5 5 L9.5 0.5" stroke="#777" stroke-width="1" fill="none"/></svg><div class="t13" style="left:394px;top:682px;color:#999">分组：称此次</div><div class="t13" style="left:394px;top:705px;color:#999">货源：</div><div class="t13" style="left:433px;top:705px;color:#04b3b1;font-size:14px">1688</div><svg class="a" style="left:476px;top:710px" width="11" height="11" viewBox="0 0 11 11"><path d="M5.5 0 V11 M0 5.5 H11" stroke="#04b3b1" stroke-width="1.2"/></svg><div class="tag" style="top:608px">英/GB</div><svg class="pen" style="left:873px;top:610px" viewBox="0 0 12 12"><path d="M5 0.3 L8.7 2.4 L4.3 9.2 L1.1 10.6 L0.7 7.1 Z" stroke="#4a4a4a" stroke-width="1.1" fill="none" stroke-linejoin="round"/><path d="M0.9 7.4 L4.2 9.2" stroke="#4a4a4a" stroke-width="0.9"/><path d="M6 10.4 H11" stroke="#4a4a4a" stroke-width="1.1"/></svg><div class="tag" style="top:631px">菲/PH</div><svg class="pen" style="left:873px;top:633px" viewBox="0 0 12 12"><path d="M5 0.3 L8.7 2.4 L4.3 9.2 L1.1 10.6 L0.7 7.1 Z" stroke="#4a4a4a" stroke-width="1.1" fill="none" stroke-linejoin="round"/><path d="M0.9 7.4 L4.2 9.2" stroke="#4a4a4a" stroke-width="0.9"/><path d="M6 10.4 H11" stroke="#4a4a4a" stroke-width="1.1"/></svg><div class="t13" style="left:1123px;top:608px;letter-spacing:1.5px">--</div><div class="t13" style="left:1123px;top:631px;letter-spacing:1.5px">--</div><div class="t13" style="left:1282px;top:608px">GBP 3.47~4.62</div><svg class="pen" style="left:1400px;top:611px" viewBox="0 0 12 12"><path d="M5 0.3 L8.7 2.4 L4.3 9.2 L1.1 10.6 L0.7 7.1 Z" stroke="#4a4a4a" stroke-width="1.1" fill="none" stroke-linejoin="round"/><path d="M0.9 7.4 L4.2 9.2" stroke="#4a4a4a" stroke-width="0.9"/><path d="M6 10.4 H11" stroke="#4a4a4a" stroke-width="1.1"/></svg><div class="t13" style="left:1282px;top:631px">PHP 700.20~933...</div><svg class="pen" style="left:1400px;top:634px" viewBox="0 0 12 12"><path d="M5 0.3 L8.7 2.4 L4.3 9.2 L1.1 10.6 L0.7 7.1 Z" stroke="#4a4a4a" stroke-width="1.1" fill="none" stroke-linejoin="round"/><path d="M0.9 7.4 L4.2 9.2" stroke="#4a4a4a" stroke-width="0.9"/><path d="M6 10.4 H11" stroke="#4a4a4a" stroke-width="1.1"/></svg><div class="t13" style="left:1438px;top:608px">18947</div><div class="t13" style="left:1438px;top:631px">18947</div><div class="bul" style="top:613px"></div><div class="t13" style="left:1605px;top:608px">英国跨境(新链路)</div><div class="bul" style="top:636px"></div><div class="t13" style="left:1605px;top:631px">菲律宾跨境(新...</div><div class="ac" style="left:1595px;top:658px">展开(3个店铺)</div><svg class="a" style="left:1677px;top:666px" width="10" height="6" viewBox="0 0 10 6"><path d="M0.5 0.5 L5 5 L9.5 0.5" stroke="#04b3b1" stroke-width="1" fill="none"/></svg><svg class="a" style="left:1596px;top:692px" width="11" height="11" viewBox="0 0 11 11"><path d="M5.5 0 V11 M0 5.5 H11" stroke="#04b3b1" stroke-width="1"/></svg><div class="ac" style="left:1616px;top:687px">选择店铺</div><div class="ac" style="left:1774px;top:612px">AI优化</div><div class="sep" style="top:616px"></div><div class="ac" style="left:1830px;top:612px">编辑</div><div class="ac" style="left:1780px;top:642px">发布</div><div class="sep" style="top:646px"></div><div class="ac" style="left:1830px;top:642px">删除</div><div class="ac" style="left:1780px;top:672px">备注</div><div class="sep" style="top:676px"></div><div class="ac" style="left:1830px;top:672px">更多</div><svg class="a" style="left:1875px;top:603px" width="9" height="11" viewBox="0 0 9 11"><path d="M0.5 0 V11" stroke="#a3a6ad" stroke-width="1.2"/><path d="M1 0.5 H9 L7 3 L9 5.5 H1 Z" fill="#a3a6ad"/></svg><div class="rb" style="top:732px"></div>
<div class="cb" style="top:745px"></div><div class="a" style="left:312px;top:744px;width:72px;height:72px;border:1px solid #e4e6ee;overflow:hidden;background:#fff"><svg width="70" height="70" viewBox="0 0 70 70"><rect width="70" height="70" fill="#fff"/><path d="M3.7 5.3 l4.5 -3.5 h5 l4.5 3.5 l-2 3.5 h-1 v6.5 h-9 v-6.5 h-1 z" fill="#e5e5e5"/><path d="M19.7 5.3 l4.5 -3.5 h5 l4.5 3.5 l-2 3.5 h-1 v6.5 h-9 v-6.5 h-1 z" fill="#f4f0e0"/><path d="M35.7 5.3 l4.5 -3.5 h5 l4.5 3.5 l-2 3.5 h-1 v6.5 h-9 v-6.5 h-1 z" fill="#e3e8ef"/><path d="M51.7 5.3 l4.5 -3.5 h5 l4.5 3.5 l-2 3.5 h-1 v6.5 h-9 v-6.5 h-1 z" fill="#f5c8cc"/><path d="M3.7 19.3 l4.5 -3.5 h5 l4.5 3.5 l-2 3.5 h-1 v6.5 h-9 v-6.5 h-1 z" fill="#bfe3ef"/><path d="M19.7 19.3 l4.5 -3.5 h5 l4.5 3.5 l-2 3.5 h-1 v6.5 h-9 v-6.5 h-1 z" fill="#cbb6ee"/><path d="M35.7 19.3 l4.5 -3.5 h5 l4.5 3.5 l-2 3.5 h-1 v6.5 h-9 v-6.5 h-1 z" fill="#b6b9be"/><path d="M51.7 19.3 l4.5 -3.5 h5 l4.5 3.5 l-2 3.5 h-1 v6.5 h-9 v-6.5 h-1 z" fill="#cdb98d"/><path d="M0.7 33.3 l4.5 -3.5 h5 l4.5 3.5 l-2 3.5 h-1 v6.5 h-9 v-6.5 h-1 z" fill="#87552a"/><path d="M14.3 33.3 l4.5 -3.5 h5 l4.5 3.5 l-2 3.5 h-1 v6.5 h-9 v-6.5 h-1 z" fill="#1e1e1e"/><path d="M27.9 33.3 l4.5 -3.5 h5 l4.5 3.5 l-2 3.5 h-1 v6.5 h-9 v-6.5 h-1 z" fill="#1f6138"/><path d="M41.5 33.3 l4.5 -3.5 h5 l4.5 3.5 l-2 3.5 h-1 v6.5 h-9 v-6.5 h-1 z" fill="#e23390"/><path d="M55.1 33.3 l4.5 -3.5 h5 l4.5 3.5 l-2 3.5 h-1 v6.5 h-9 v-6.5 h-1 z" fill="#6e1016"/><path d="M0.7 47.3 l4.5 -3.5 h5 l4.5 3.5 l-2 3.5 h-1 v6.5 h-9 v-6.5 h-1 z" fill="#c8141c"/><path d="M14.3 47.3 l4.5 -3.5 h5 l4.5 3.5 l-2 3.5 h-1 v6.5 h-9 v-6.5 h-1 z" fill="#2440c0"/><path d="M27.9 47.3 l4.5 -3.5 h5 l4.5 3.5 l-2 3.5 h-1 v6.5 h-9 v-6.5 h-1 z" fill="#1c2048"/><path d="M41.5 47.3 l4.5 -3.5 h5 l4.5 3.5 l-2 3.5 h-1 v6.5 h-9 v-6.5 h-1 z" fill="#4a1c30"/><path d="M55.1 47.3 l4.5 -3.5 h5 l4.5 3.5 l-2 3.5 h-1 v6.5 h-9 v-6.5 h-1 z" fill="#3a3e3f"/></svg></div><div class="t14" style="left:394px;top:744px">210g Premium 100% Cotton Crew Neck</div><div class="t14" style="left:394px;top:765px">T-Shirt Triple Stitched Seams Full...</div><svg class="a" style="left:659px;top:749px" width="12" height="11" viewBox="0 0 12 11"><path d="M7 0.5 H1.5 A1 1 0 0 0 0.5 1.5 V9.5 A1 1 0 0 0 1.5 10.5 H10 A1 1 0 0 0 11 9.5 V4" stroke="#808080" stroke-width="1" fill="none"/><path d="M5 5.5 L11.3 0" stroke="#808080" stroke-width="1"/></svg><div class="a" style="left:394px;top:790px;width:112px;height:26px;border:1px solid #dcdfe6;border-radius:3px"></div><div class="a" style="left:483px;top:790px;width:1px;height:26px;background:#dcdfe6"></div><div class="t13" style="left:403px;top:792px;color:#555">搜1688同款</div><svg class="a" style="left:490px;top:800px" width="10" height="6" viewBox="0 0 10 6"><path d="M0.5 0.5 L5 5 L9.5 0.5" stroke="#777" stroke-width="1" fill="none"/></svg><div class="t13" style="left:394px;top:819px;color:#999">分组：称此次</div><div class="t13" style="left:394px;top:842px;color:#999">货源：</div><div class="t13" style="left:433px;top:842px;color:#04b3b1;font-size:14px">1688</div><svg class="a" style="left:476px;top:847px" width="11" height="11" viewBox="0 0 11 11"><path d="M5.5 0 V11 M0 5.5 H11" stroke="#04b3b1" stroke-width="1.2"/></svg><div class="tag" style="top:745px">英/GB</div><svg class="pen" style="left:873px;top:747px" viewBox="0 0 12 12"><path d="M5 0.3 L8.7 2.4 L4.3 9.2 L1.1 10.6 L0.7 7.1 Z" stroke="#4a4a4a" stroke-width="1.1" fill="none" stroke-linejoin="round"/><path d="M0.9 7.4 L4.2 9.2" stroke="#4a4a4a" stroke-width="0.9"/><path d="M6 10.4 H11" stroke="#4a4a4a" stroke-width="1.1"/></svg><div class="tag" style="top:768px;background:#e3f6f6;color:#04b3b1">西/ES</div><div class="t13" style="left:872px;top:768px;color:#333">男士上装>男士T恤</div><div class="t13" style="left:1123px;top:745px;letter-spacing:1.5px">--</div><div class="t13" style="left:1126px;top:768px">EUR 1.19</div><svg class="pen" style="left:1244px;top:770px" viewBox="0 0 12 12"><path d="M5 0.3 L8.7 2.4 L4.3 9.2 L1.1 10.6 L0.7 7.1 Z" stroke="#4a4a4a" stroke-width="1.1" fill="none" stroke-linejoin="round"/><path d="M0.9 7.4 L4.2 9.2" stroke="#4a4a4a" stroke-width="0.9"/><path d="M6 10.4 H11" stroke="#4a4a4a" stroke-width="1.1"/></svg><div class="t13" style="left:1282px;top:745px">GBP 1.03</div><svg class="pen" style="left:1400px;top:748px" viewBox="0 0 12 12"><path d="M5 0.3 L8.7 2.4 L4.3 9.2 L1.1 10.6 L0.7 7.1 Z" stroke="#4a4a4a" stroke-width="1.1" fill="none" stroke-linejoin="round"/><path d="M0.9 7.4 L4.2 9.2" stroke="#4a4a4a" stroke-width="0.9"/><path d="M6 10.4 H11" stroke="#4a4a4a" stroke-width="1.1"/></svg><div class="t13" style="left:1280px;top:768px;letter-spacing:1.5px">--</div><div class="t13" style="left:1438px;top:745px">300000</div><div class="t13" style="left:1438px;top:768px">300000</div><div class="bul" style="top:750px"></div><div class="t13" style="left:1605px;top:745px">英国跨境(新链路)</div><div class="bul" style="top:773px"></div><div class="t13" style="left:1605px;top:768px">西班牙g</div><div class="ac" style="left:1595px;top:795px">展开(3个店铺)</div><svg class="a" style="left:1677px;top:803px" width="10" height="6" viewBox="0 0 10 6"><path d="M0.5 0.5 L5 5 L9.5 0.5" stroke="#04b3b1" stroke-width="1" fill="none"/></svg><svg class="a" style="left:1596px;top:829px" width="11" height="11" viewBox="0 0 11 11"><path d="M5.5 0 V11 M0 5.5 H11" stroke="#04b3b1" stroke-width="1"/></svg><div class="ac" style="left:1616px;top:824px">选择店铺</div><div class="ac" style="left:1774px;top:749px">AI优化</div><div class="sep" style="top:753px"></div><div class="ac" style="left:1830px;top:749px">编辑</div><div class="ac" style="left:1780px;top:779px">发布</div><div class="sep" style="top:783px"></div><div class="ac" style="left:1830px;top:779px">删除</div><div class="ac" style="left:1780px;top:809px">备注</div><div class="sep" style="top:813px"></div><div class="ac" style="left:1830px;top:809px">更多</div><svg class="a" style="left:1875px;top:740px" width="9" height="11" viewBox="0 0 9 11"><path d="M0.5 0 V11" stroke="#a3a6ad" stroke-width="1.2"/><path d="M1 0.5 H9 L7 3 L9 5.5 H1 Z" fill="#a3a6ad"/></svg><div class="rb" style="top:869px"></div>
<!-- floating buttons -->
<div class="a" style="left:1868px;top:678px;width:30px;height:34px;border-radius:4px;background:rgba(118,118,118,0.56)"></div>
<svg class="a" style="left:1879px;top:687px" width="14" height="16" viewBox="0 0 14 16"><path d="M1 1 L7 8 L1 15 M7 1 L13 8 L7 15" stroke="#fff" stroke-width="1.3" fill="none"/></svg>
<div class="a" style="left:1868px;top:719px;width:30px;height:35px;border-radius:4px;background:rgba(118,118,118,0.56)"></div>
<svg class="a" style="left:1878px;top:723px" width="16" height="26" viewBox="0 0 16 26"><rect x="1" y="1" width="13" height="22" rx="2.5" fill="none" stroke="#fff" stroke-width="1.5"/><rect x="3" y="4" width="9" height="14" fill="#fff" opacity="0.3"/><circle cx="7.5" cy="20.5" r="0.9" fill="#fff"/></svg>
<div class="a" style="left:1868px;top:761px;width:30px;height:34px;border-radius:4px;background:rgba(118,118,118,0.56)"></div>
<svg class="a" style="left:1878px;top:769px" width="16" height="18" viewBox="0 0 16 18"><path d="M1 1 H16 V13 H1 Z" fill="none" stroke="#fff" stroke-width="1.2"/><path d="M0 15 H16 M1 17 H16" stroke="#fff" stroke-width="1.2"/><text x="8" y="11" text-anchor="middle" font-size="10" fill="#fff" font-family="Liberation Sans">?</text></svg>

<!-- annotations -->
<div class="a" style="left:1381px;top:449px;width:58px;height:69px;border:4px solid #f24a4d;border-radius:2px"></div>
<div class="a" style="left:1811px;top:462px;width:62px;height:44px;border:4px solid #f24a4d;border-radius:2px"></div>
<svg class="a" style="left:0;top:0" width="1892" height="797" viewBox="0 0 1892 797">
<path d="M1419.8 493.2 L1447.2 497.7 L1442.7 502.6 L1563 577 L1562 578.5 L1438.6 509 L1436 513.8 Z" fill="#f24a4d"/>
<path d="M1842.7 514.5 L1839 539 L1835.5 537.5 L1757.5 646 L1755 645 L1825.5 533 L1820.5 531 Z" fill="#f24a4d"/>
</svg>
</body></html>
